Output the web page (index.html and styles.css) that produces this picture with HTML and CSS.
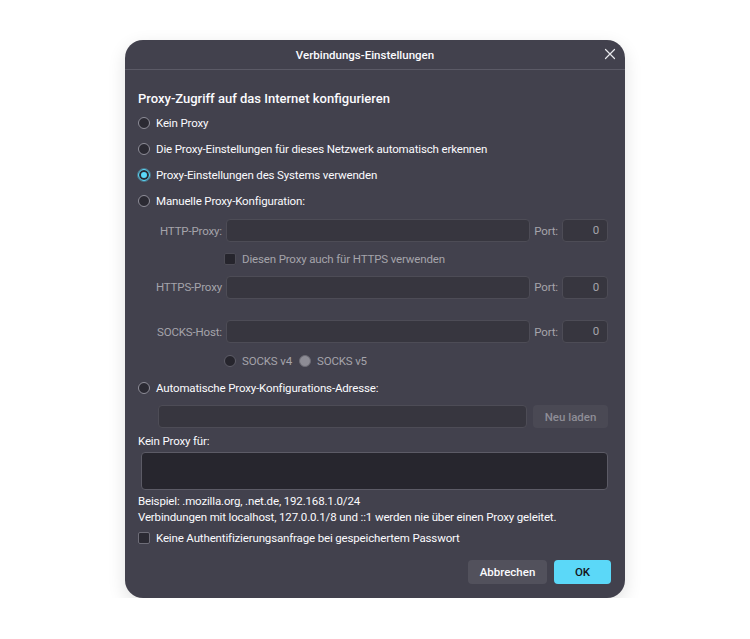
FILE: index.html
```html
<!DOCTYPE html>
<html lang="de">
<head>
    <meta charset="UTF-8">
    <title>Verbindungs-Einstellungen</title>
    <link rel="stylesheet" href="styles.css">
</head>
<body>
<div class="dialog">
    <div class="titlebar">
        <span>Verbindungs-Einstellungen</span>
        <svg class="close" width="12" height="12" viewBox="0 0 12 12">
            <path d="M1.5 1.5 L10.5 10.5 M10.5 1.5 L1.5 10.5" stroke="#e8e8ec" stroke-width="1.2" stroke-linecap="round"/>
        </svg>
    </div>
    <div class="content">
        <div class="heading">Proxy-Zugriff auf das Internet konfigurieren</div>
        <div class="row radio-row"><span class="radio"></span>Kein Proxy</div>
        <div class="row radio-row"><span class="radio"></span>Die Proxy-Einstellungen für dieses Netzwerk automatisch erkennen</div>
        <div class="row radio-row"><span class="radio checked"></span>Proxy-Einstellungen des Systems verwenden</div>
        <div class="row radio-row"><span class="radio"></span>Manuelle Proxy-Konfiguration:</div>

        <div class="field-row http">
            <span class="field-label">HTTP-Proxy:</span>
            <span class="input"></span>
            <span class="port-label">Port:</span>
            <span class="input port">0</span>
        </div>
        <div class="sub-row check-sub">
            <span class="checkbox disabled"></span>Diesen Proxy auch für HTTPS verwenden
        </div>
        <div class="field-row https">
            <span class="field-label">HTTPS-Proxy</span>
            <span class="input"></span>
            <span class="port-label">Port:</span>
            <span class="input port">0</span>
        </div>
        <div class="field-row socks">
            <span class="field-label">SOCKS-Host:</span>
            <span class="input"></span>
            <span class="port-label">Port:</span>
            <span class="input port">0</span>
        </div>
        <div class="sub-row socks-versions">
            <span class="radio disabled"></span>SOCKS v4
            <span class="radio disabled checked-gray"></span>SOCKS v5
        </div>

        <div class="row radio-row"><span class="radio"></span>Automatische Proxy-Konfigurations-Adresse:</div>
        <div class="auto-row">
            <span class="input"></span>
            <span class="btn reload">Neu laden</span>
        </div>

        <div class="plain-label">Kein Proxy für:</div>
        <div class="textarea"></div>
        <div class="note first">Beispiel: .mozilla.org, .net.de, 192.168.1.0/24</div>
        <div class="note">Verbindungen mit localhost, 127.0.0.1/8 und ::1 werden nie über einen Proxy geleitet.</div>
        <div class="row check-row"><span class="checkbox"></span>Keine Authentifizierungsanfrage bei gespeichertem Passwort</div>

        <div class="buttons">
            <span class="btn cancel">Abbrechen</span>
            <span class="btn ok">OK</span>
        </div>
    </div>
</div>
</body>
</html>
```
FILE: styles.css
```css
body {
    margin: 0;
    background: #ffffff;
    font-family: Roboto, "Liberation Sans", sans-serif;
    font-size: 11.5px;
    letter-spacing: -0.15px;
    color: #fbfbfe;
}
.dialog {
    width: 500px;
    margin: 40px auto 0;
    background: #42414d;
    border-radius: 18px;
    box-shadow: 0 6px 18px rgba(0, 0, 0, 0.12);
    overflow: hidden;
}
.titlebar {
    height: 29px;
    padding-right: 20px;
    border-bottom: 1px solid #5b5a66;
    display: flex;
    align-items: center;
    justify-content: center;
    position: relative;
    font-weight: 500;
    font-size: 11.5px;
    letter-spacing: 0;
}
.close {
    position: absolute;
    right: 9px;
    top: 8px;
}
.content {
    padding: 20px 13px 14px;
    display: flex;
    flex-direction: column;
}
.heading {
    height: 18px;
    line-height: 18px;
    font-weight: 500;
    font-size: 13px;
    letter-spacing: 0;
    margin-bottom: 2px;
}
.row {
    display: flex;
    align-items: center;
}
.radio-row {
    height: 26px;
    gap: 6px;
}
.radio {
    width: 10px;
    height: 10px;
    border-radius: 50%;
    border: 1px solid #8f8e99;
    background: #2b2a33;
    flex-shrink: 0;
}
.radio.checked {
    background: #2b2a33;
    border: 1px solid #5bd8f8;
    box-shadow: inset 0 0 0 2px #2b2a33, inset 0 0 0 6px #5bd8f8;
    outline: 1px solid rgba(91, 216, 248, 0.35);
}
.radio.disabled {
    border-color: #5e5d68;
    background: #26252d;
}
.radio.checked-gray {
    background: #8d8c95;
    border-color: #6c6b74;
}
.field-row {
    display: flex;
    align-items: center;
    gap: 4px;
    margin-left: 3px;
    margin-right: 4px;
    color: #a5a4ab;
}
.field-row.http { height: 33px; }
.field-row.https { height: 32px; }
.field-row.socks { height: 31px; margin-top: 13px; }
.field-label {
    width: 81px;
    text-align: right;
    flex-shrink: 0;
}
.input {
    flex: 1;
    height: 21px;
    background: #37363f;
    border: 1px solid #4d4c56;
    border-radius: 4px;
}
.input.port {
    flex: 0 0 46px;
    box-sizing: border-box;
    height: 23px;
    text-align: right;
    line-height: 21px;
    padding-right: 8px;
}
.sub-row {
    display: flex;
    align-items: center;
    margin-left: 86px;
    color: #a5a4ab;
}
.check-sub {
    height: 24px;
    gap: 6px;
}
.socks-versions {
    height: 28px;
    gap: 6px;
}
.socks-versions .checked-gray {
    margin-left: 1px;
}
.checkbox {
    width: 10px;
    height: 10px;
    border: 1px solid #6e6d78;
    border-radius: 2px;
    background: #2b2a33;
    flex-shrink: 0;
}
.checkbox.disabled {
    border-color: #4c4b55;
    background: #26252d;
}
.auto-row {
    height: 31px;
    display: flex;
    align-items: center;
    gap: 6px;
    margin-left: 20px;
    margin-right: 4px;
}
.btn {
    display: flex;
    align-items: center;
    justify-content: center;
    border-radius: 4px;
    font-weight: 500;
    letter-spacing: 0;
}
.reload {
    width: 75px;
    height: 23px;
    background: #4a4954;
    color: #8e8d96;
}
.plain-label {
    height: 18px;
    line-height: 18px;
}
.textarea {
    height: 36px;
    margin: 2px 4px 0 3px;
    background: #27262e;
    border: 1px solid #5c5b66;
    border-radius: 4px;
}
.note {
    height: 16px;
    line-height: 16px;
}
.note.first {
    margin-top: 3px;
}
.check-row {
    height: 22px;
    gap: 6px;
    margin-top: 2px;
}
.buttons {
    display: flex;
    justify-content: flex-end;
    gap: 7px;
    margin-top: 11px;
    margin-right: 1px;
}
.cancel {
    width: 79px;
    height: 24px;
    background: #52515c;
}
.ok {
    width: 57px;
    height: 24px;
    background: #5bd8f8;
    color: #15141a;
}
```
